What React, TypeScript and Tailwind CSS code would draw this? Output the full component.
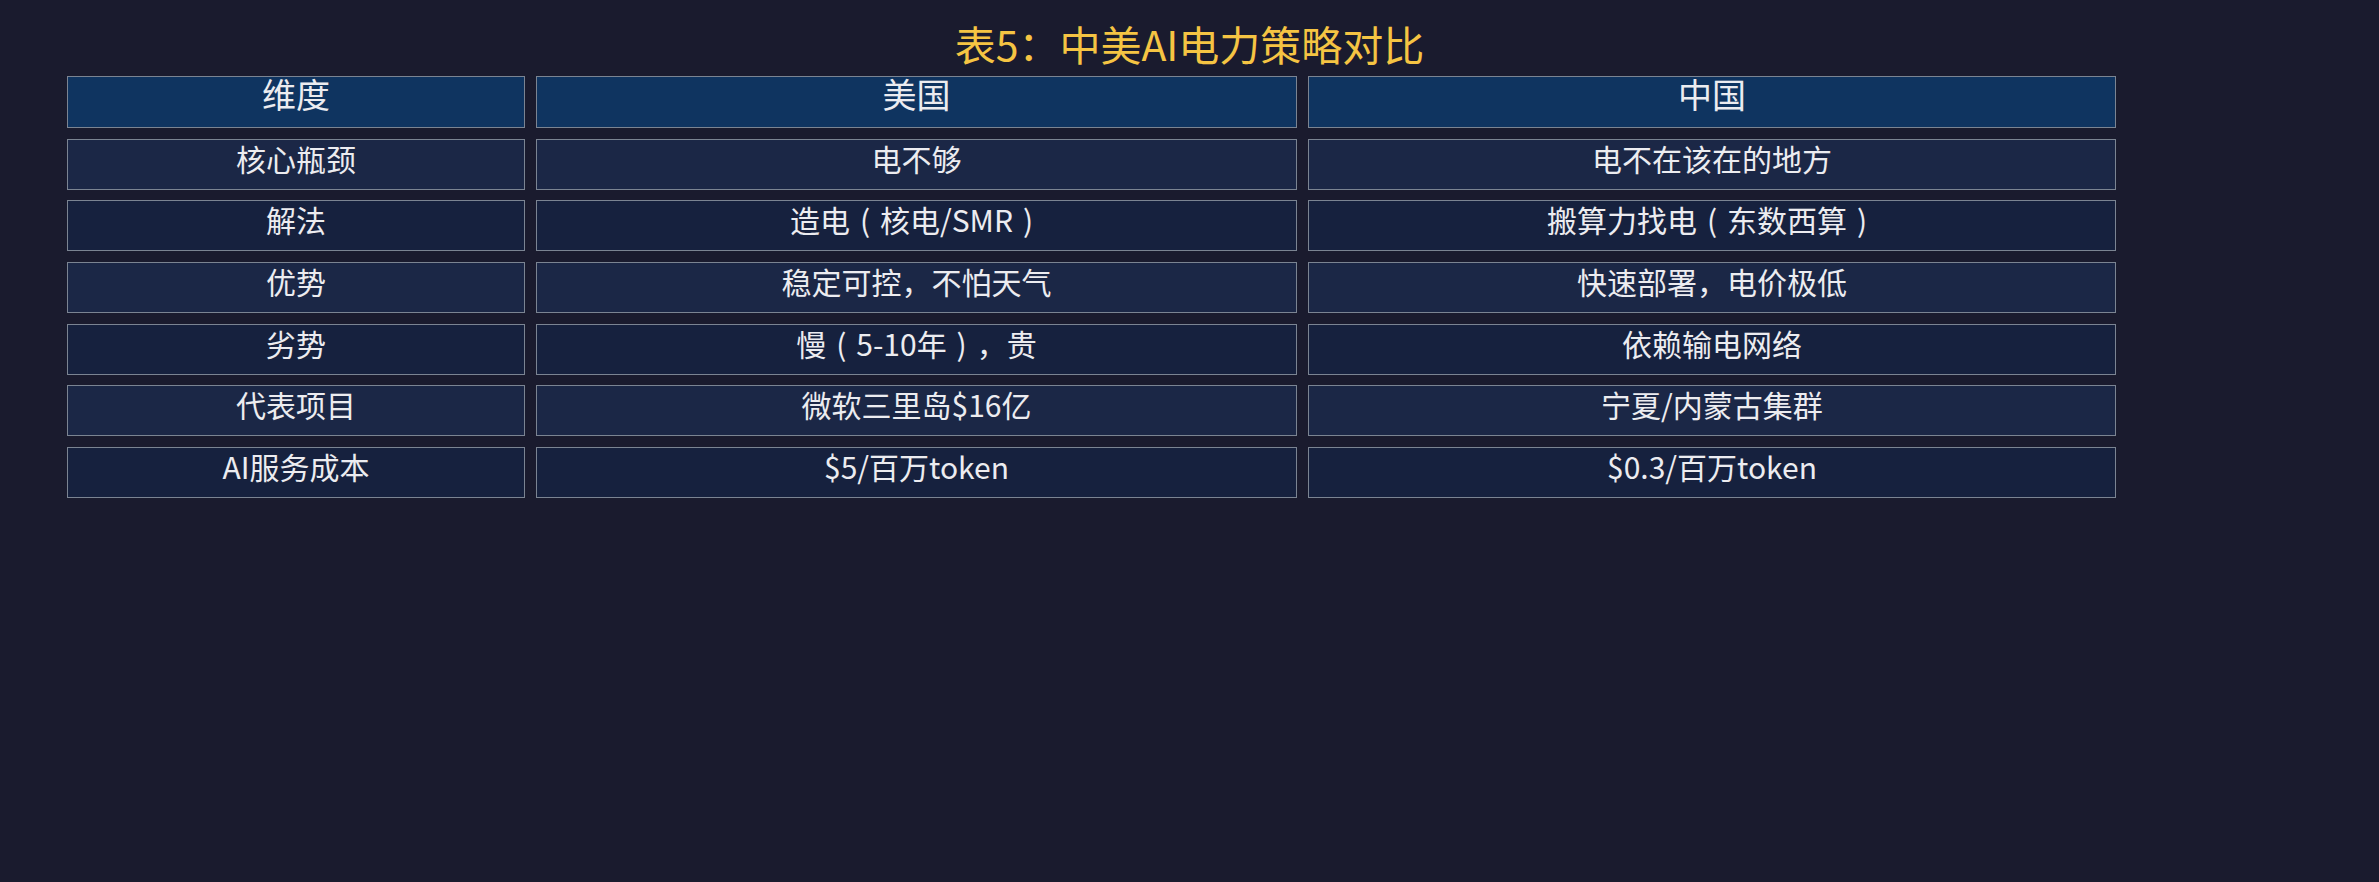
import { Fragment } from "react";

const rows: [string, string, string][] = [
  ["核心瓶颈", "电不够", "电不在该在的地方"],
  ["解法", "造电（核电/SMR）", "搬算力找电（东数西算）"],
  ["优势", "稳定可控，不怕天气", "快速部署，电价极低"],
  ["劣势", "慢（5-10年），贵", "依赖输电网络"],
  ["代表项目", "微软三里岛$16亿", "宁夏/内蒙古集群"],
  ["AI服务成本", "$5/百万token", "$0.3/百万token"],
];

const font = { fontFamily: '"Noto Sans CJK SC", "Noto Sans", sans-serif' };

// full-width parens sit centred in their em box in the source
function Cell({ text }: { text: string }) {
  const parts = text.split(/([（）])/);
  return (
    <>
      {parts.map((p, k) =>
        p === "（" || p === "）" ? (
          <span key={k} className="inline-block w-[1em] text-center">
            {p === "（" ? "(" : ")"}
          </span>
        ) : (
          <Fragment key={k}>{p}</Fragment>
        )
      )}
    </>
  );
}

export default function App() {
  return (
    <div className="h-[882px] w-full bg-[#1a1b2e] text-[#ececf0]" style={font}>
      <h1 className="pt-[23px] text-center text-[41px] leading-none font-normal text-[#f5c443]">
        表5：中美AI电力策略对比
      </h1>

      <div className="ml-[67px] mt-[12px] grid w-fit grid-cols-[458px_761px_808px] gap-x-[11px] gap-y-[10.67px]">
        {["维度", "美国", "中国"].map((h) => (
          <div
            key={h}
            className="h-[52px] border border-[#7b8492] bg-[#0f3460] text-center text-[34px] leading-none"
          >
            {h}
          </div>
        ))}

        {rows.map((r, i) =>
          r.map((cell, j) => (
            <div
              key={`${i}-${j}`}
              className={`h-[51px] border border-[#7b8492] pt-[3px] text-center text-[30px] leading-none ${
                i % 2 === 0 ? "bg-[#1b2746]" : "bg-[#16213e]"
              }`}
            >
              <Cell text={cell} />
            </div>
          ))
        )}
      </div>
    </div>
  );
}
